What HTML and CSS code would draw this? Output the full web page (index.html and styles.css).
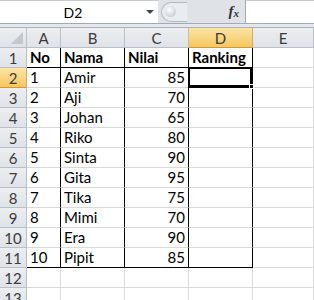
FILE: index.html
```html
<!DOCTYPE html>
<html lang="id">
<head>
    <meta charset="UTF-8">
    <title>Ranking Nilai</title>
    <link rel="stylesheet" href="styles.css">
</head>
<body>
    <div class="formula-bar">
        <div class="name-box">
            <span class="name-text">D2</span>
            <span class="name-arrow"></span>
        </div>
        <div class="fx-panel">
            <span class="grip"><span class="grip-knob"></span></span>
            <span class="fx">f<sub>x</sub></span>
        </div>
        <div class="formula-input"></div>
    </div>
    <div class="band"></div>

    <div class="sheet">
        <div class="hd corner"><span class="corner-mark"></span></div>
        <div class="hd col">A</div>
        <div class="hd col">B</div>
        <div class="hd col">C</div>
        <div class="hd col active">D</div>
        <div class="hd col">E</div>

        <div class="hd row">1</div>
        <div class="cell b bold first">No</div>
        <div class="cell b bold first">Nama</div>
        <div class="cell b bold first">Nilai</div>
        <div class="cell b bold first">Ranking</div>
        <div class="cell"></div>

        <div class="hd row active">2</div>
        <div class="cell b">1</div>
        <div class="cell b">Amir</div>
        <div class="cell b num">85</div>
        <div class="cell b selected"><span class="sel-box"><span class="handle"></span></span></div>
        <div class="cell"></div>

        <div class="hd row">3</div>
        <div class="cell b">2</div>
        <div class="cell b">Aji</div>
        <div class="cell b num">70</div>
        <div class="cell b"></div>
        <div class="cell"></div>

        <div class="hd row">4</div>
        <div class="cell b">3</div>
        <div class="cell b">Johan</div>
        <div class="cell b num">65</div>
        <div class="cell b"></div>
        <div class="cell"></div>

        <div class="hd row">5</div>
        <div class="cell b">4</div>
        <div class="cell b">Riko</div>
        <div class="cell b num">80</div>
        <div class="cell b"></div>
        <div class="cell"></div>

        <div class="hd row">6</div>
        <div class="cell b">5</div>
        <div class="cell b">Sinta</div>
        <div class="cell b num">90</div>
        <div class="cell b"></div>
        <div class="cell"></div>

        <div class="hd row">7</div>
        <div class="cell b">6</div>
        <div class="cell b">Gita</div>
        <div class="cell b num">95</div>
        <div class="cell b"></div>
        <div class="cell"></div>

        <div class="hd row">8</div>
        <div class="cell b">7</div>
        <div class="cell b">Tika</div>
        <div class="cell b num">75</div>
        <div class="cell b"></div>
        <div class="cell"></div>

        <div class="hd row">9</div>
        <div class="cell b">8</div>
        <div class="cell b">Mimi</div>
        <div class="cell b num">70</div>
        <div class="cell b"></div>
        <div class="cell"></div>

        <div class="hd row">10</div>
        <div class="cell b">9</div>
        <div class="cell b">Era</div>
        <div class="cell b num">90</div>
        <div class="cell b"></div>
        <div class="cell"></div>

        <div class="hd row">11</div>
        <div class="cell b last">10</div>
        <div class="cell b last">Pipit</div>
        <div class="cell b last num">85</div>
        <div class="cell b last"></div>
        <div class="cell"></div>

        <div class="hd row">12</div>
        <div class="cell"></div>
        <div class="cell"></div>
        <div class="cell"></div>
        <div class="cell"></div>
        <div class="cell"></div>

        <div class="hd row">13</div>
        <div class="cell"></div>
        <div class="cell"></div>
        <div class="cell"></div>
        <div class="cell"></div>
        <div class="cell"></div>
    </div>
</body>
</html>
```

FILE: styles.css
```css
* {
    margin: 0;
    padding: 0;
    box-sizing: border-box;
}

body {
    width: 314px;
    height: 300px;
    overflow: hidden;
    background: #ffffff;
    font-family: Lato, "Liberation Sans", sans-serif;
    color: #000000;
}

/* formula bar */
.formula-bar {
    display: flex;
    height: 24px;
    background: #dfe3e8;
    border-bottom: 1px solid #a3aab3;
}

.name-box {
    width: 158px;
    display: flex;
    align-items: center;
    background: #ffffff;
    border-top: 1px solid #c6cbd1;
}

.name-text {
    flex: 1;
    text-align: center;
    font-size: 14px;
}

.name-arrow {
    width: 0;
    height: 0;
    margin-right: 4px;
    border-left: 4px solid transparent;
    border-right: 4px solid transparent;
    border-top: 4px solid #444444;
}

.fx-panel {
    width: 88px;
    display: flex;
    align-items: center;
    padding: 2px 6px 2px 3px;
    border-right: 1px solid #a3aab3;
}

.grip {
    width: 26px;
    height: 20px;
    display: flex;
    align-items: center;
    padding-left: 3px;
    border: 1px solid #b4bac2;
    border-right: none;
    border-radius: 10px 0 0 10px;
    background: #e9ecf0;
}

.grip-knob {
    width: 11px;
    height: 11px;
    border-radius: 50%;
    background: radial-gradient(circle at 40% 35%, #ffffff 0%, #d5d9de 60%, #b8bec6 100%);
}

.fx {
    margin-left: auto;
    font-family: "Liberation Serif", serif;
    font-style: italic;
    font-weight: bold;
    font-size: 15px;
    color: #333333;
}

.fx sub {
    font-size: 11px;
    vertical-align: -1px;
}

.formula-input {
    flex: 1;
    background: #ffffff;
    border-top: 1px solid #c6cbd1;
}

.band {
    height: 3px;
    background: #e4e7eb;
}

/* grid */
.sheet {
    display: grid;
    grid-template-columns: 27px 34px 64px 64px 64px 1fr;
    grid-template-rows: 21px;
    grid-auto-rows: 20px;
}

.hd {
    display: flex;
    align-items: center;
    justify-content: center;
    font-size: 15px;
    color: #3b3b3b;
    background: linear-gradient(#eceef1, #dfe2e7);
    border-right: 1px solid #b9bfc7;
    border-bottom: 1px solid #b9bfc7;
}

.hd.col {
    border-top: 1px solid #a8b0ba;
}

.corner {
    border-top: 1px solid #a8b0ba;
    position: relative;
}

.corner-mark {
    position: absolute;
    right: 3px;
    bottom: 3px;
    width: 0;
    height: 0;
    border-left: 12px solid transparent;
    border-bottom: 12px solid #c3c8cf;
}

.hd.active {
    background: linear-gradient(#fbe4a6, #f5c75f);
    border-right-color: #e0a94b;
    border-bottom-color: #d9982f;
}

.cell {
    display: flex;
    align-items: flex-end;
    padding: 0 3px 1px 3px;
    font-size: 15px;
    line-height: 18px;
    white-space: nowrap;
    border-right: 1px solid #d9d9d9;
    border-bottom: 1px solid #d9d9d9;
}

.cell.b {
    border-right-color: #000000;
}

.cell.first,
.cell.last {
    border-bottom-color: #000000;
}

.bold {
    font-weight: bold;
}

.num {
    justify-content: flex-end;
}

.selected {
    position: relative;
}

.sel-box {
    position: absolute;
    top: -1px;
    left: -1px;
    right: 0;
    bottom: -1px;
    border: 2px solid #000000;
    border-bottom-width: 3px;
}

.handle {
    position: absolute;
    right: -4px;
    bottom: -4px;
    width: 5px;
    height: 5px;
    background: #000000;
    border: 1px solid #ffffff;
}
```
